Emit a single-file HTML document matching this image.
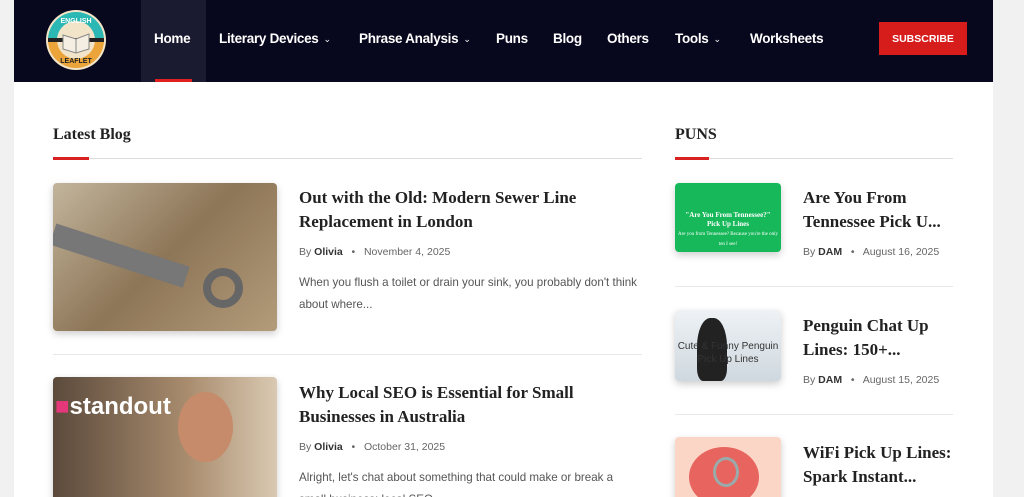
<!DOCTYPE html>
<html><head><meta charset="utf-8"><style>
*{margin:0;padding:0;box-sizing:border-box}
html,body{width:1024px;height:497px;overflow:hidden}
body{background:#f1f1f1;font-family:"Liberation Sans",sans-serif;position:relative}
.wrap{position:absolute;left:14px;top:0;width:979px;height:497px;background:#fff;overflow:hidden}
.hdr{position:absolute;left:0;top:0;width:979px;height:82px;background:#07071d}
.nav{position:absolute;top:31px;font-size:13.5px;font-weight:bold;color:#fff;letter-spacing:-0.3px;white-space:nowrap}
.nav i{font-style:normal;font-size:9px;font-weight:normal;margin-left:5px;position:relative;top:-1px}
.home{position:absolute;left:127px;top:0;width:65px;height:82px;background:#1a1a30}
.homebar{position:absolute;left:141px;top:79px;width:37px;height:3px;background:#e0201f}
.sub{position:absolute;left:865px;top:22px;width:88px;height:33px;background:#d71c1c;color:#fff;font-size:10.5px;font-weight:bold;display:flex;align-items:center;justify-content:center}
.h{position:absolute;font-family:"Liberation Serif",serif;font-weight:bold;color:#222}
.line{position:absolute;height:1px;background:#ddd}
.red{position:absolute;height:3px;background:#d92121}
.t{position:absolute;font-family:"Liberation Serif",serif;font-weight:bold;color:#222;font-size:17px;line-height:24px;white-space:nowrap}
.meta{position:absolute;font-size:10.5px;color:#666;white-space:nowrap}
.meta b{color:#333;font-weight:bold}
.ex{position:absolute;font-size:11.6px;color:#555;line-height:22px;white-space:nowrap}
.img{position:absolute;border-radius:4px;box-shadow:0 3px 8px rgba(0,0,0,.2);overflow:hidden}
</style></head><body>
<div class="wrap">
<div class="hdr">
 <svg style="position:absolute;left:31px;top:9px" width="62" height="62" viewBox="0 0 62 62">
  <circle cx="31" cy="31" r="30" fill="#f2e4c8"/>
  <path d="M3 31 A28 28 0 0 1 59 31Z" fill="#2bb8b5"/>
  <path d="M3 31 A28 28 0 0 0 59 31Z" fill="#eba43a"/>
  <circle cx="31" cy="31" r="19" fill="#f2e4c8"/>
  <rect x="3" y="29" width="56" height="4" fill="#222"/>
  <path d="M18 26 L31 30 L44 25 L44 40 L31 44 L18 40Z" fill="#f4efe2" stroke="#888"/>
  <path d="M31 30 L31 44" stroke="#888"/>
  <text x="31" y="14" font-size="7" font-weight="bold" fill="#fff" text-anchor="middle" font-family="Liberation Sans">ENGLISH</text>
  <text x="31" y="54" font-size="7" font-weight="bold" fill="#222" text-anchor="middle" font-family="Liberation Sans">LEAFLET</text>
 </svg>
 <div class="home"></div>
 <div class="nav" style="left:140px">Home</div>
 <div class="nav" style="left:205px">Literary Devices<i>⌄</i></div>
 <div class="nav" style="left:345px">Phrase Analysis<i>⌄</i></div>
 <div class="nav" style="left:482px">Puns</div>
 <div class="nav" style="left:539px">Blog</div>
 <div class="nav" style="left:593px">Others</div>
 <div class="nav" style="left:661px">Tools<i>⌄</i></div>
 <div class="nav" style="left:736px">Worksheets</div>
 <div class="homebar"></div>
 <div class="sub">SUBSCRIBE</div>
</div>
<div class="h" style="left:39px;top:126px;font-size:16px;font-weight:600">Latest Blog</div>
<div class="line" style="left:39px;top:158px;width:589px"></div>
<div class="red" style="left:39px;top:157px;width:36px"></div>
<div class="h" style="left:661px;top:126px;font-size:16px;font-weight:600">PUNS</div>
<div class="line" style="left:661px;top:158px;width:278px"></div>
<div class="red" style="left:661px;top:157px;width:34px"></div>

<div class="img" style="left:39px;top:183px;width:224px;height:148px;background:linear-gradient(135deg,#c2b59c,#8d7557 50%,#b39c7a)">
 <div style="position:absolute;left:0;top:40px;width:140px;height:22px;background:#777;transform:rotate(18deg);transform-origin:left"></div>
 <div style="position:absolute;left:150px;top:85px;width:40px;height:40px;border-radius:50%;border:8px solid #666"></div></div>
<div class="t" style="left:285px;top:186px">Out with the Old: Modern Sewer Line<br>Replacement in London</div>
<div class="meta" style="left:285px;top:246px">By <b>Olivia</b> &nbsp; • &nbsp; November 4, 2025</div>
<div class="ex" style="left:285px;top:272px">When you flush a toilet or drain your sink, you probably don't think<br>about where...</div>
<div class="line" style="left:39px;top:354px;width:589px;background:#e8e8e8"></div>

<div class="img" style="left:39px;top:377px;width:224px;height:130px;background:linear-gradient(90deg,#5b4a3c,#a98c6e 60%,#d9c9b2)">
 <div style="position:absolute;left:2px;top:16px;color:#fff;font-weight:bold;font-size:24px"><span style="color:#e4387a">■</span>standout</div>
 <div style="position:absolute;left:125px;top:15px;width:55px;height:70px;border-radius:50%;background:#c58b6a"></div></div>
<div class="t" style="left:285px;top:381px">Why Local SEO is Essential for Small<br>Businesses in Australia</div>
<div class="meta" style="left:285px;top:441px">By <b>Olivia</b> &nbsp; • &nbsp; October 31, 2025</div>
<div class="ex" style="left:285px;top:467px">Alright, let's chat about something that could make or break a<br>small business: local SEO...</div>

<div class="img" style="left:661px;top:183px;width:106px;height:69px;background:#17b85a;color:#fff;font-size:7px;font-weight:bold;text-align:center;padding-top:28px;line-height:9px;font-family:'Liberation Serif',serif">"Are You From Tennessee?"<br>Pick Up Lines<br><span style="font-weight:normal;font-size:5px">Are you from Tennessee? Because you're the only ten I see!</span></div>
<div class="t" style="left:789px;top:186px">Are You From<br>Tennessee Pick U...</div>
<div class="meta" style="left:789px;top:246px">By <b>DAM</b> &nbsp; • &nbsp; August 16, 2025</div>
<div class="line" style="left:661px;top:286px;width:278px;background:#e8e8e8"></div>

<div class="img" style="left:661px;top:310px;width:106px;height:71px;background:linear-gradient(#eef2f5,#cfd8df);font-size:10px;color:#333;text-align:center;padding-top:30px;line-height:13px">
 <div style="position:absolute;left:22px;top:8px;width:30px;height:63px;border-radius:45% 45% 20% 20%;background:#222"></div>
 <span style="position:relative">Cute & Funny Penguin<br>Pick Up Lines</span></div>
<div class="t" style="left:789px;top:314px">Penguin Chat Up<br>Lines: 150+...</div>
<div class="meta" style="left:789px;top:374px">By <b>DAM</b> &nbsp; • &nbsp; August 15, 2025</div>
<div class="line" style="left:661px;top:414px;width:278px;background:#e8e8e8"></div>

<div class="img" style="left:661px;top:437px;width:106px;height:70px;background:#fbd6c7">
 <div style="position:absolute;left:14px;top:10px;width:70px;height:60px;border-radius:50%;background:#e8645f"></div>
 <div style="position:absolute;left:38px;top:20px;width:26px;height:30px;border-radius:50%;border:3px solid #9aa"></div></div>
<div class="t" style="left:789px;top:441px">WiFi Pick Up Lines:<br>Spark Instant...</div>
</div>
</body></html>
